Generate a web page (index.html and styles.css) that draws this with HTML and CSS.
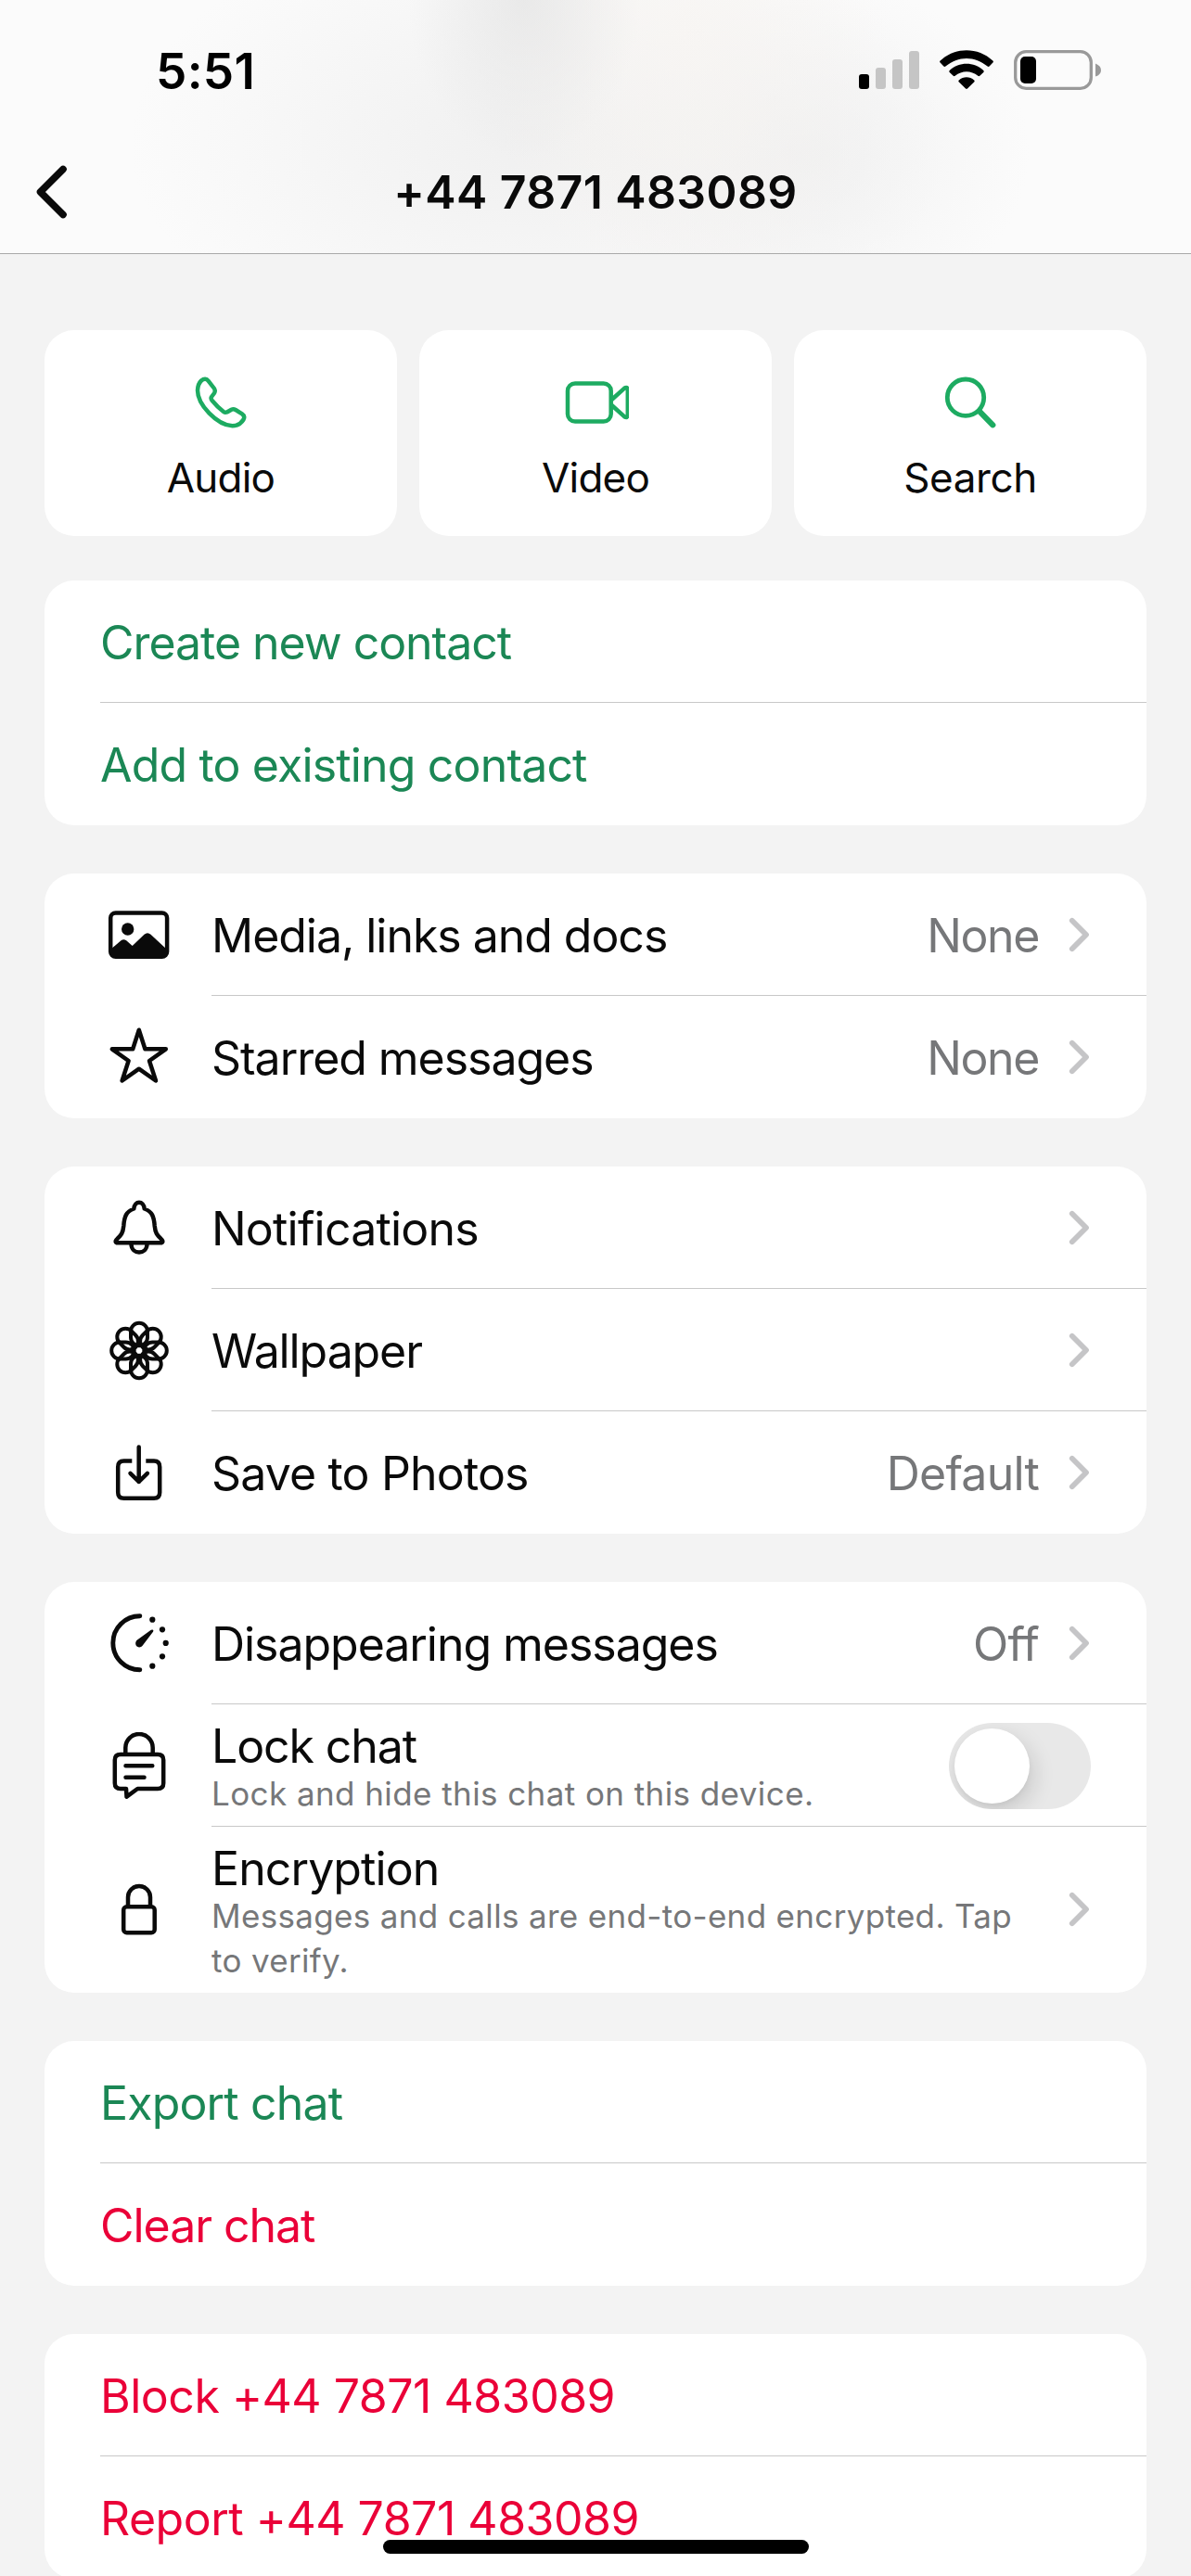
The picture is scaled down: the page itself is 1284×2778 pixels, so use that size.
FILE: index.html
```html
<!DOCTYPE html>
<html lang="en">
<head>
<meta charset="utf-8">
<title>Contact info</title>
<link rel="stylesheet" href="styles.css">
</head>
<body>
<svg class="defs" width="0" height="0" aria-hidden="true">
  <symbol id="chevron" viewBox="0 0 24 42"><path d="M3.8 5.8 19 21 3.8 36.2" fill="none" stroke="#c5c5c7" stroke-width="5.8" stroke-linecap="round" stroke-linejoin="round"/></symbol>
</svg>
<div class="screen">
  <header class="header">
    <div class="status">
      <span class="time">5:51</span>
      <div class="indicators">
        <svg width="65" height="43" viewBox="0 0 65 43"><rect y="26" width="11" height="16" rx="3"/><g fill="#c5c5c5"><rect x="18" y="19" width="11" height="23" rx="3"/><rect x="36" y="10" width="11" height="32" rx="3"/><rect x="54" y="1" width="11" height="41" rx="3"/></g></svg>
        <svg width="58" height="43" viewBox="0 0 58 43"><path d="M.6 13.600Q-.4 12.600.6 11.600C16.500-3.500 41.500-3.500 57.400 11.600Q58.400 12.600 57.400 13.600L53.600 17.600Q52.600 18.500 51.600 17.600C38.500 6 19.500 6 6.400 17.600Q5.400 18.500 4.400 17.600Z"/><path d="M10.700 24Q9.700 23 10.700 22C21 12.300 37 12.300 47.300 22Q48.300 23 47.300 24L43.300 27.800Q42.300 28.700 41.300 27.800C34 21.600 24 21.600 16.700 27.800Q15.700 28.700 14.700 27.800Z"/><path d="M20.600 34.200Q19.800 33.200 20.800 32.400C25.500 28.200 32.500 28.200 37.200 32.400Q38.200 33.200 37.400 34.200L30 41.500Q29 42.400 28 41.500Z"/></svg>
        <svg width="94" height="43" viewBox="0 0 94 43"><rect x="1.700" y="1.700" width="81.600" height="39.600" rx="11.500" fill="none" stroke="#999" stroke-width="3.300"/><rect x="7" y="7" width="17" height="29" rx="5"/><path d="M88 14.500Q94 17 94 21.700T88 28.600Z" fill="#999"/></svg>
      </div>
    </div>
    <div class="nav">
      <svg class="back" width="40" height="64" viewBox="0 0 40 64"><path d="M33 7.500 8.500 32 33 56.500" fill="none" stroke="#0a0a0a" stroke-width="7.600" stroke-linecap="round" stroke-linejoin="round"/></svg>
      <h1 class="title">+44 7871 483089</h1>
    </div>
  </header>

  <main class="content">
    <div class="tiles">
      <div class="tile">
        <svg class="tile-icon" viewBox="0 0 72 72"><path d="M15 12.500Q19.500 8.700 22.700 12.800L29 21Q30.500 23.700 29 26L26 30Q25 32 26.500 33.700 32.500 41 39 46 40.700 47.300 42.700 46.500L47.500 43.700Q49.700 42.700 52 44L59 48.300Q62.500 50.700 60.500 54.500 56.500 61 48.500 61.300C32 60.500 11 38.500 11 23Q11.300 16 15 12.500Z"/></svg>
        <span class="tile-label w-audio">Audio</span>
      </div>
      <div class="tile">
        <svg class="tile-icon" viewBox="0 0 72 72"><rect x="6" y="15.400" width="46.700" height="41.200" rx="8"/><path d="M53.500 33 67 20.800Q70.600 18.700 70.800 22.500V49.500Q70.600 53.300 67 51.200L53.500 39"/></svg>
        <span class="tile-label w-audio">Video</span>
      </div>
      <div class="tile">
        <svg class="tile-icon" viewBox="0 0 72 72"><circle cx="31" cy="30.700" r="19.700" stroke-width="4.800"/><path d="M46 45.600 60.300 60.300" stroke-width="6.200"/></svg>
        <span class="tile-label w-search">Search</span>
      </div>
    </div>

    <section class="card">
      <div class="row plain"><div class="body green"><span class="label">Create new contact</span></div></div>
      <div class="row plain"><div class="body green"><span class="label w-save">Add to existing contact</span></div></div>
    </section>

    <section class="card">
      <div class="row">
        <svg class="icon" viewBox="0 0 72 72"><rect x="5.200" y="12.500" width="60.900" height="47.300" rx="5.500" stroke-width="4.500"/><circle cx="23.700" cy="30" r="6.700" class="solid"/><path class="solid" d="M5 52 16.500 42.300Q19.300 40 22.200 42.300L28.700 48 41.500 35.800Q45 32.500 48.500 35.800L66 52V58L62 61H9L5 58Z"/></svg>
        <div class="body"><span class="label">Media, links and docs</span><span class="value w-none">None</span><svg class="chevron"><use href="#chevron"/></svg></div>
      </div>
      <div class="row">
        <svg class="icon" viewBox="0 0 72 72"><path d="M35.800 6.700 42.400 27.300H64.800L47 40 54 61.500 35.800 48.700 17.600 61.500 24.600 40 6.800 27.300H29.200Z"/></svg>
        <div class="body"><span class="label">Starred messages</span><span class="value w-none">None</span><svg class="chevron"><use href="#chevron"/></svg></div>
      </div>
    </section>

    <section class="card">
      <div class="row">
        <svg class="icon" viewBox="0 0 72 72"><path d="M12 52.300Q9.500 51.500 11.500 49C17 43.500 18.500 42 19.300 34 20 24 22 18.500 30.300 15.500 31 6.500 41 6.500 41.700 15.500 50 18.500 52 24 52.700 34 53.500 42 55 43.500 60.500 49Q62.500 51.500 60 52.300Z"/><path d="M27.500 54C28 65.300 44 65.300 44.500 54"/></svg>
        <div class="body"><span class="label w-notif">Notifications</span><svg class="chevron"><use href="#chevron"/></svg></div>
      </div>
      <div class="row">
        <svg class="icon flower" viewBox="-36 -36.500 72 72"><rect id="petal" x="-9" y="-29.800" width="18" height="24.500" rx="9"/><use href="#petal" transform="rotate(45)"/><use href="#petal" transform="rotate(90)"/><use href="#petal" transform="rotate(135)"/><use href="#petal" transform="rotate(180)"/><use href="#petal" transform="rotate(225)"/><use href="#petal" transform="rotate(270)"/><use href="#petal" transform="rotate(315)"/></svg>
        <div class="body"><span class="label w-wall">Wallpaper</span><svg class="chevron"><use href="#chevron"/></svg></div>
      </div>
      <div class="row">
        <svg class="icon" viewBox="0 0 72 72"><path stroke-linecap="butt" d="M28.300 23.600H19.500Q13.200 23.600 13.200 30V57.500Q13.200 63.800 19.500 63.800H52Q58.200 63.800 58.200 57.500V30Q58.200 23.600 52 23.600H43.300"/><path d="M35.700 8.500V46M26.500 36.800 35.700 45.800 44.900 36.800"/></svg>
        <div class="body"><span class="label w-save">Save to Photos</span><span class="value w-default">Default</span><svg class="chevron"><use href="#chevron"/></svg></div>
      </div>
    </section>

    <section class="card">
      <div class="row">
        <svg class="icon" viewBox="0 0 72 72"><path stroke-width="4.900" d="M36.800 6.800A29 29 0 1 0 36.800 64.800"/><g class="solid"><circle cx="50.300" cy="10.700" r="3.100"/><circle cx="61" cy="21.300" r="3.100"/><circle cx="64.700" cy="35.900" r="3.100"/><circle cx="61" cy="50.300" r="3.100"/><circle cx="50.300" cy="60.700" r="3.100"/><path d="M33.300 33 48.800 21.800Q51.200 20.800 51.400 22.600 51.300 23.400 50.800 24L39.600 38.800C36 43 29.500 38.500 33.300 33Z"/></g></svg>
        <div class="body"><span class="label">Disappearing messages</span><span class="value w-default">Off</span><svg class="chevron"><use href="#chevron"/></svg></div>
      </div>
      <div class="row">
        <svg class="icon" viewBox="0 0 72 72"><path d="M21.300 23V16.700A14.700 14.700 0 0 1 50.700 16.700V23"/><path d="M22 61H16Q9.800 61 9.800 55V30Q9.800 24 16 24H56Q62.200 24 62.200 30V55Q62.200 61 56 61H34.300L22.500 69.600Z"/><path d="M21.500 36.300H50.300M21.500 48.700H41.500"/></svg>
        <div class="body">
          <div class="stack"><span class="stack-title w-lock">Lock chat</span><span class="note w-locknote">Lock and hide this chat on this device.</span></div>
          <div class="switch"><div class="knob"></div></div>
        </div>
      </div>
      <div class="row tall">
        <svg class="icon" viewBox="0 0 72 72"><path d="M24 31V22A12 12 0 0 1 48 22V31"/><rect x="19.200" y="32.200" width="33.500" height="28" rx="3.500"/></svg>
        <div class="body">
          <div class="stack"><span class="stack-title">Encryption</span><span class="note">Messages and calls are end-to-end encrypted. Tap<br>to verify.</span></div>
          <svg class="chevron"><use href="#chevron"/></svg>
        </div>
      </div>
    </section>

    <section class="card">
      <div class="row plain"><div class="body green"><span class="label w-save">Export chat</span></div></div>
      <div class="row plain"><div class="body red"><span class="label">Clear chat</span></div></div>
    </section>

    <section class="card">
      <div class="row plain"><div class="body red"><span class="label w-number">Block +44 7871 483089</span></div></div>
      <div class="row plain"><div class="body red"><span class="label w-number">Report +44 7871 483089</span></div></div>
    </section>
  </main>
  <div class="home-indicator"></div>
</div>
</body>
</html>
```
FILE: styles.css
```css
* { box-sizing: border-box; }

body {
  margin: 0;
  background: #f3f3f3;
  color: #0a0a0a;
  font-family: Inter, "Liberation Sans", sans-serif;
  font-size: 50px;
}

.defs { position: absolute; }

.screen {
  position: relative;
  width: 1284px;
  height: 2778px;
  overflow: hidden;
}

/* Header */
.header {
  height: 274px;
  border-bottom: 1px solid #a9a9a9;
  background:
    radial-gradient(ellipse 125px 170px at 565px 0, rgba(226, 226, 226, .65), rgba(235, 235, 235, 0)),
    radial-gradient(ellipse 220px 300px at 740px 40px, rgba(248, 245, 242, .7), rgba(248, 244, 240, 0)),
    radial-gradient(ellipse 250px 190px at 860px 165px, rgba(236, 236, 236, .65), rgba(242, 242, 242, 0)),
    radial-gradient(ellipse 440px 250px at 580px 155px, rgba(237, 237, 237, .8), rgba(243, 243, 243, 0)),
    #fbfbfb;
}

.status {
  display: flex;
  justify-content: space-between;
  height: 144px;
  padding: 54px 97px 0 168px;
}

.time {
  color: #000;
  font-size: 53px;
  font-weight: 600;
  line-height: 46px;
  letter-spacing: .3px;
}

.indicators {
  display: flex;
  gap: 22px;
}

.nav {
  display: grid;
  grid-template-columns: 100px 1fr 100px;
  align-items: center;
  height: 129px;
  padding: 0 36px;
}

.back {
  margin-top: -4px;
  margin-left: -1px;
}

.title {
  margin: 0;
  padding-bottom: 3px;
  font-size: 50px;
  font-weight: 600;
  line-height: 60px;
  letter-spacing: .38px;
  text-align: center;
}

/* Page content */
.content {
  display: flex;
  flex-direction: column;
  gap: 52px;
  padding: 82px 48px 0;
}

.tiles {
  display: grid;
  grid-template-columns: repeat(3, 1fr);
  gap: 24px;
  margin-bottom: -4px;
}

.tile {
  display: flex;
  flex-direction: column;
  align-items: center;
  gap: 19px;
  height: 222px;
  padding-top: 42px;
  border-radius: 32px;
  background: #fff;
}

.tile-icon {
  width: 72px;
  height: 72px;
  fill: none;
  stroke: #1dab61;
  stroke-width: 4.5;
  stroke-linecap: round;
  stroke-linejoin: round;
}

.tile-label {
  font-size: 44px;
  line-height: 52px;
}

.card {
  overflow: hidden;
  border-radius: 32px;
  background: #fff;
}

.row {
  display: flex;
  align-items: center;
  gap: 42px;
  height: 132px;
  padding-left: 66px;
}

.row.tall { height: 179px; }
.row.plain { padding-left: 60px; }

.icon {
  flex: none;
  width: 72px;
  height: 72px;
  fill: none;
  stroke: #0a0a0a;
  stroke-width: 4.5;
  stroke-linecap: round;
  stroke-linejoin: round;
}

.icon.flower { stroke-width: 4; }

.icon .solid { fill: #0a0a0a; stroke: none; }

.body {
  display: flex;
  flex: 1;
  align-items: center;
  height: 100%;
  padding-right: 60px;
  border-bottom: 1px solid #c8c8c8;
}

.row:last-child .body { border-bottom-color: transparent; }

.label {
  flex: 1;
  padding-top: 2px;
  line-height: 60px;
  letter-spacing: -1.04px;
  white-space: nowrap;
}

.value {
  margin-right: 32px;
  padding-top: 2px;
  color: #767779;
  line-height: 60px;
}

.chevron {
  flex: none;
  width: 24px;
  height: 42px;
}

.stack {
  display: flex;
  flex: 1;
  flex-direction: column;
  align-self: flex-start;
  padding-top: 17px;
  white-space: nowrap;
}

.stack-title {
  line-height: 56px;
  letter-spacing: -.9px;
}

.note {
  margin-top: -1px;
  color: #767779;
  font-size: 35px;
  line-height: 48px;
  letter-spacing: .33px;
}

.green { color: #1b8755; }
.red { color: #ea0038; }

/* Tracking of individual texts */
.w-audio { letter-spacing: -.8px; }
.w-search { letter-spacing: -.4px; }
.w-notif { letter-spacing: -.8px; }
.w-save { letter-spacing: -.84px; }
.w-wall { letter-spacing: -1.1px; }
.w-lock { letter-spacing: -1.1px; }
.w-number { letter-spacing: -.49px; }
.w-none { letter-spacing: -1.4px; }
.w-default { letter-spacing: -.8px; }
.w-locknote { letter-spacing: .42px; }

.switch {
  width: 153px;
  height: 93px;
  margin-top: 2px;
  padding: 6px;
  overflow: hidden;
  border-radius: 47px;
  background: #e8e8e8;
}

.knob {
  width: 81px;
  height: 81px;
  border-radius: 50%;
  background: #fff;
  box-shadow: 4px 9px 24px rgba(0, 0, 0, .14), 0 3px 5px rgba(0, 0, 0, .04);
}

.home-indicator {
  position: absolute;
  left: 413px;
  bottom: 24px;
  width: 459px;
  height: 15px;
  border-radius: 8px;
  background: #000;
}
```
